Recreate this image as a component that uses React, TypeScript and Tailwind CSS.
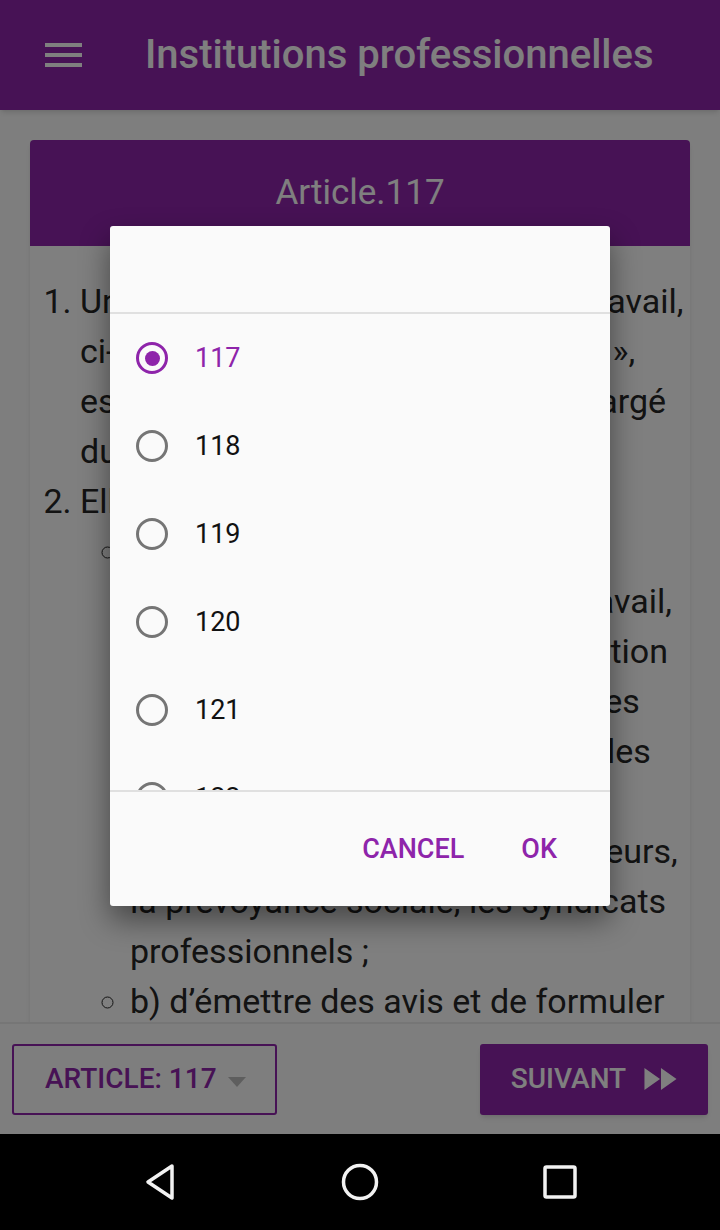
const choices = [117, 118, 119, 120, 121, 122];

function Radio({ checked }: { checked: boolean }) {
  return checked ? (
    <span className="flex h-[32px] w-[32px] items-center justify-center rounded-full border-[3px] border-[#8e24aa]">
      <span className="h-[15px] w-[15px] rounded-full bg-[#8e24aa]" />
    </span>
  ) : (
    <span className="h-[32px] w-[32px] rounded-full border-[3px] border-[#757575]" />
  );
}

export default function App() {
  return (
    <div className="flex h-[1230px] w-[720px] flex-col overflow-hidden font-['Roboto',sans-serif]">
      <div className="relative flex flex-1 flex-col overflow-hidden bg-[#fdfdfd]">
        {/* App bar */}
        <header className="relative z-10 flex h-[110px] shrink-0 items-center bg-[#8e24aa] shadow-md">
          <div className="ml-[45px] flex w-[37px] flex-col gap-[6px]">
            <span className="h-[4px] bg-white" />
            <span className="h-[4px] bg-white" />
            <span className="h-[4px] bg-white" />
          </div>
          <h1 className="ml-[63px] text-[40px] font-medium text-white">Institutions professionnelles</h1>
        </header>

        {/* Article */}
        <main className="flex-1 overflow-hidden px-[30px] pt-[30px]">
          <div className="rounded-[4px] bg-white shadow-md">
            <div className="flex h-[106px] items-center justify-center rounded-t-[4px] bg-[#8e24aa] text-[35px] text-white">
              Article.117
            </div>
            <ol className="list-decimal pb-[30px] pl-[50px] pr-0 pt-[30px] text-[34px] leading-[50px] text-[#262626]">
              <li>
                Une Commission consultative du travail, ci-après désignée « la Commission », est instituée auprès du
                Ministre chargé du travail.
              </li>
              <li>
                Elle a pour mission :
                <ul className="list-[circle] pl-[50px]">
                  <li>
                    a) d’étudier les problèmes concernant les conditions de travail, l’emploi, l’orientation et la formation
                    professionnelles, les migrants, les relations de travail, les salaires, les conditions de vie et de
                    travail, l’hygiène, la sécurité des travailleurs, la prévoyance sociale, les syndicats professionnels ;
                  </li>
                  <li>b) d’émettre des avis et de formuler des propositions sur la réglementation à intervenir ;</li>
                </ul>
              </li>
            </ol>
          </div>
        </main>

        {/* Bottom bar */}
        <footer className="flex h-[112px] shrink-0 items-center justify-between border-t-2 border-[#ececec] bg-[#fdfdfd] px-[12px]">
          <button className="flex h-[71px] w-[265px] items-center rounded-[3px] border-2 border-[#8e24aa] pl-[31px] text-[28px] font-medium text-[#8e24aa]">
            ARTICLE: 117
            <span className="ml-[11px] mt-[6px] h-0 w-0 border-x-[9px] border-t-[10px] border-x-transparent border-t-[#bdbdbd]" />
          </button>
          <button className="flex h-[71px] w-[228px] items-center justify-center gap-[18px] rounded-[3px] bg-[#8e24aa] text-[28px] font-medium text-white shadow-md">
            SUIVANT
            <svg width="33" height="22" viewBox="4 6 17.5 12" fill="currentColor">
              <path d="M4 18l8.5-6L4 6v12zm9-12v12l8.5-6L13 6z" />
            </svg>
          </button>
        </footer>

        {/* Scrim */}
        <div className="absolute inset-0 z-20 bg-black/50" />

        {/* Picker dialog */}
        <div className="absolute left-[110px] top-[226px] z-30 flex h-[680px] w-[500px] flex-col rounded-[3px] bg-[#fafafa] shadow-[0_14px_30px_rgba(0,0,0,0.45)]">
          <div className="h-[88px] shrink-0 border-b-2 border-[#e0e0e0]" />
          <div className="h-[476px] shrink-0 overflow-hidden">
            {choices.map((n) => (
              <div key={n} className="flex h-[88px] items-center pl-[26px]">
                <Radio checked={n === 117} />
                <span className={`ml-[27px] text-[27px] ${n === 117 ? "text-[#8e24aa]" : "text-[#111]"}`}>{n}</span>
              </div>
            ))}
          </div>
          <div className="flex flex-1 items-center justify-end gap-[57px] border-t-2 border-[#e0e0e0] pr-[53px] text-[27px] font-medium text-[#8e24aa]">
            <span>CANCEL</span>
            <span>OK</span>
          </div>
        </div>
      </div>

      {/* System navigation */}
      <nav className="flex h-[96px] shrink-0 items-center justify-center bg-black">
        <div className="flex w-[200px] justify-center">
          <svg width="32" height="38" viewBox="0 0 32 38" fill="none" stroke="#f2f2f2" strokeWidth="3.5" strokeLinejoin="round">
            <path d="M28 3 L4 19 L28 35 Z" />
          </svg>
        </div>
        <div className="flex w-[200px] justify-center">
          <svg width="38" height="38" viewBox="0 0 38 38" fill="none" stroke="#f2f2f2" strokeWidth="3.5">
            <circle cx="19" cy="19" r="16.5" />
          </svg>
        </div>
        <div className="flex w-[200px] justify-center">
          <svg width="34" height="34" viewBox="0 0 34 34" fill="none" stroke="#f2f2f2" strokeWidth="3.5">
            <rect x="2" y="2" width="30" height="30" rx="1.5" />
          </svg>
        </div>
      </nav>
    </div>
  );
}
